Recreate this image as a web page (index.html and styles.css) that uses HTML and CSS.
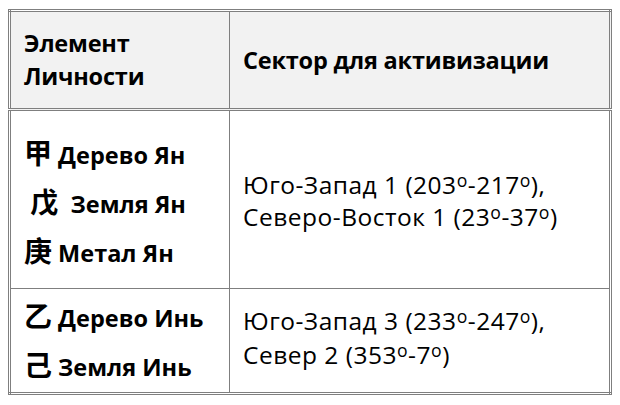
FILE: index.html
```html
<!DOCTYPE html>
<html lang="ru">
<head>
<meta charset="utf-8">
<link rel="stylesheet" href="styles.css">
</head>
<body>
<table class="grid">
  <tr class="head">
    <th class="c1">Элемент<br>Личности</th>
    <th class="c2">Сектор для активизации</th>
  </tr>
  <tr class="row-yang">
    <td class="c1">
      <p class="el"><span class="hz">甲</span> Дерево Ян</p>
      <p class="el"><span class="hz"> 戊</span>&nbsp; Земля Ян</p>
      <p class="el"><span class="hz">庚</span> Метал Ян</p>
    </td>
    <td class="c2 sect">Юго-Запад 1 (203<sup>o</sup>-217<sup>o</sup>),<br>Северо-Восток 1 (23<sup>o</sup>-37<sup>o</sup>)</td>
  </tr>
  <tr class="row-yin">
    <td class="c1">
      <p class="el"><span class="hz">乙</span> Дерево Инь</p>
      <p class="el"><span class="hz">己</span> Земля Инь</p>
    </td>
    <td class="c2 sect">Юго-Запад 3 (233<sup>o</sup>-247<sup>o</sup>),<br>Север 2 (353<sup>o</sup>-7<sup>o</sup>)</td>
  </tr>
</table>
</body>
</html>
```

FILE: styles.css
```css
html, body {
  margin: 0;
  padding: 0;
  background: #ffffff;
}
body {
  padding: 9px 8px 0 8px;
  font-family: "Open Sans", "Noto Sans", sans-serif;
  color: #000;
}
.grid {
  border-collapse: collapse;
  width: 604px;
  border: 3px double #7f7f7f;
}
.grid th, .grid td {
  border: 1px solid #7f7f7f;
  padding: 0 0 0 13px;
  text-align: left;
  vertical-align: middle;
}
.head { height: 99px; }
.head th {
  background: #f2f2f2;
  border-bottom: 3px double #7f7f7f;
  font-weight: 700;
  font-size: 23.5px;
  letter-spacing: -0.2px;
  line-height: 33px;
}
.c1 { width: 205px; }
.row-yang { height: 179px; }
.row-yin { height: 105px; }
.row-yang .c1 { padding-top: 10px; }
.row-yin .c1 { padding-top: 5px; }
.el {
  margin: 0;
  font-weight: 700;
  font-size: 23.5px;
  line-height: 49px;
  white-space: pre;
}
.hz {
  font-family: "Noto Sans CJK SC", sans-serif;
  font-size: 28px;
  font-weight: 700;
  line-height: 1;
}
.sect {
  font-size: 24.5px;
  letter-spacing: 0.5px;
  line-height: 32px;
}
.row-yang .sect { padding-top: 2px; }
.row-yin .sect { line-height: 34px; padding-bottom: 6px; }
sup {
  font-size: 0.72em;
  line-height: 0;
  vertical-align: 0.42em;
}
```
